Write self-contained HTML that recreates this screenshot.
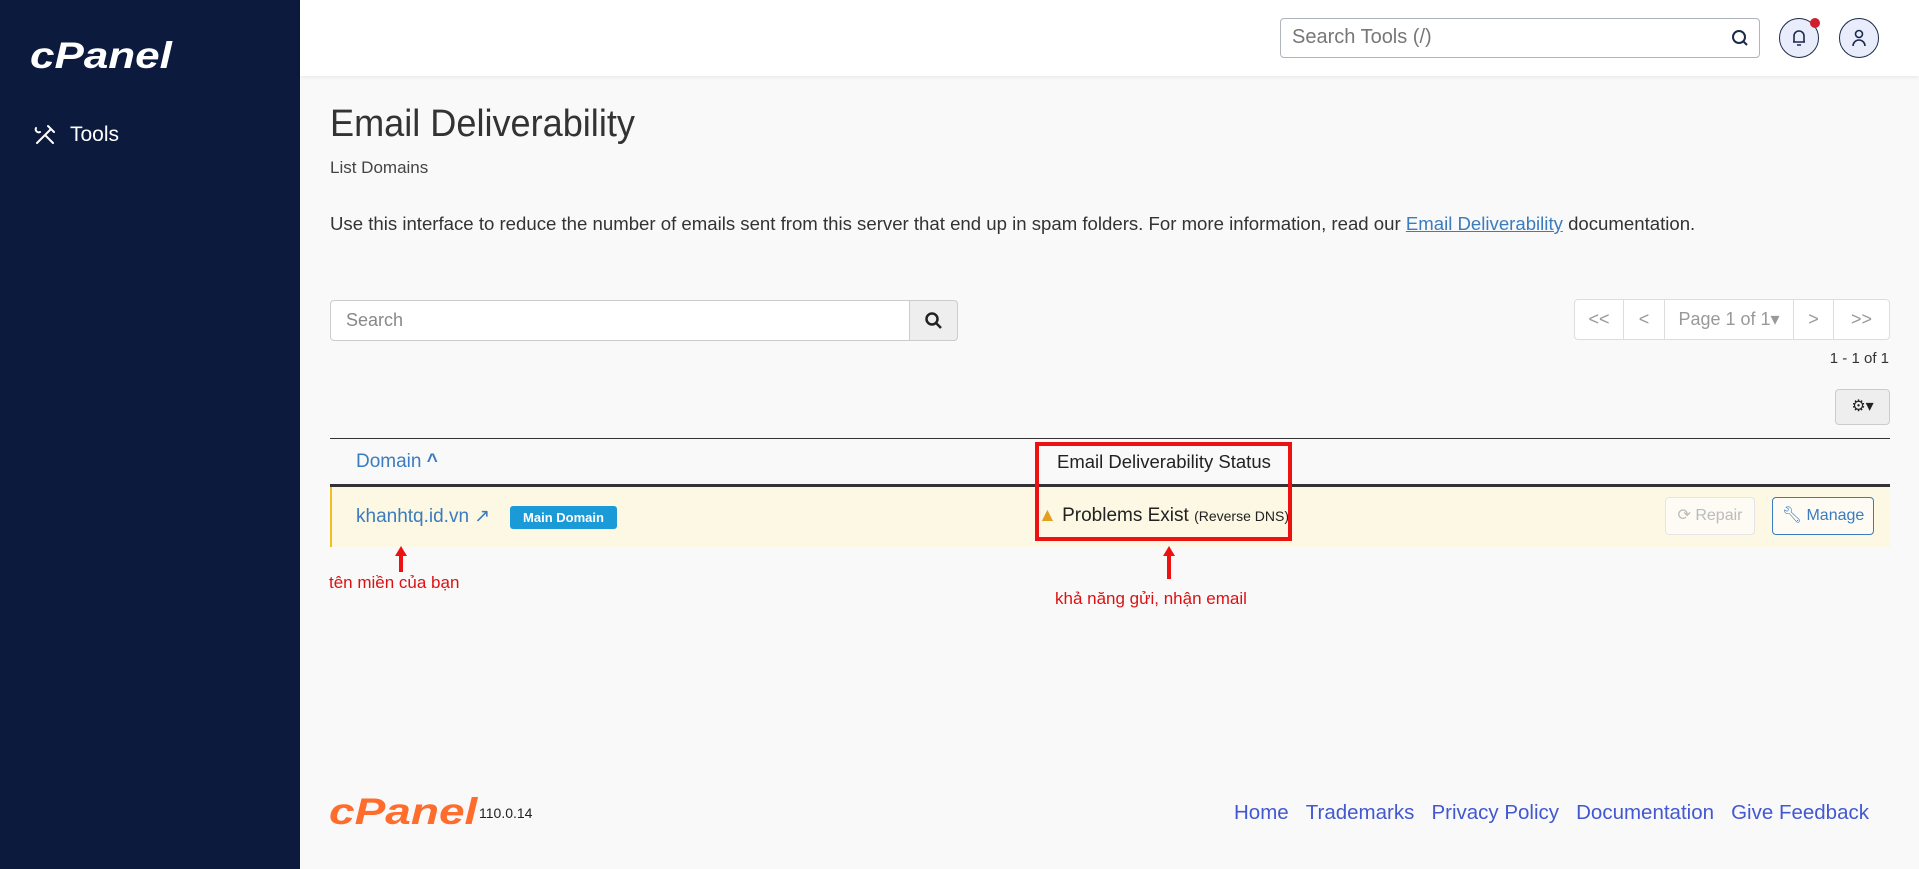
<!DOCTYPE html>
<html><head><meta charset="utf-8"><style>
*{box-sizing:border-box;margin:0;padding:0}
body{width:1919px;height:869px;overflow:hidden;background:#f9f9f9;font-family:"Liberation Sans",sans-serif;position:relative;color:#333}
.side{position:absolute;left:0;top:0;width:300px;height:869px;background:#0b1a3d}
.hdr{position:absolute;left:300px;top:0;right:0;height:76px;background:#fff;box-shadow:0 2px 4px rgba(0,0,0,.06)}
.abs{position:absolute}
.btn{position:absolute;border:1px solid #ccc;background:#fff;border-radius:4px}
</style></head><body>
<div class="side">
 <div class="abs" style="left:30px;top:31px;color:#fff;font:italic bold 44px 'Liberation Sans',sans-serif;letter-spacing:0px;transform:scaleY(.85);transform-origin:0 50%">cPanel</div>
 <svg class="abs" style="left:33px;top:123px" width="24" height="24" viewBox="0 0 24 24" fill="none" stroke="#fff" stroke-width="2" stroke-linecap="round"><path d="M4 20L18 6M15 3l6 6M20 20L12 12M3 5a3 3 0 0 0 4 4"/></svg>
 <div class="abs" style="left:70px;top:123px;color:#fff;font-size:21px">Tools</div>
</div>
<div class="hdr">
 <div class="abs" style="left:980px;top:18px;width:480px;height:40px;border:1px solid #b0b4bd;border-radius:4px"></div>
 <div class="abs" style="left:992px;top:26px;font-size:20px;color:#777">Search Tools (/)</div>
 <svg class="abs" style="left:1430px;top:28px" width="20" height="20" viewBox="0 0 20 20" fill="none" stroke="#1a2a4a" stroke-width="2"><circle cx="9" cy="9" r="6"/><path d="M13 13l4 4"/></svg>
 <div class="abs" style="left:1479px;top:18px;width:40px;height:40px;border:1px solid #1a2a4a;border-radius:50%;background:#e8ecfb"></div>
 <svg class="abs" style="left:1490px;top:28px" width="18" height="20" viewBox="0 0 18 20" fill="none" stroke="#1a2a4a" stroke-width="1.6"><path d="M4 14V8a5 5 0 0 1 10 0v6M3 14h12M7 17h4"/></svg>
 <div class="abs" style="left:1510px;top:18px;width:10px;height:10px;border-radius:50%;background:#d0202e"></div>
 <div class="abs" style="left:1539px;top:18px;width:40px;height:40px;border:1px solid #1a2a4a;border-radius:50%;background:#e8ecfb"></div>
 <svg class="abs" style="left:1549px;top:28px" width="20" height="20" viewBox="0 0 20 20" fill="none" stroke="#1a2a4a" stroke-width="1.6"><circle cx="10" cy="6" r="3.5"/><path d="M4 18a6 6 0 0 1 12 0"/></svg>
</div>
<div class="abs" style="left:330px;top:103px;font-size:38px;color:#333;font-weight:300;transform:scaleX(.95);transform-origin:0 0">Email Deliverability</div>
<div class="abs" style="left:330px;top:158px;font-size:17px;color:#444">List Domains</div>
<div class="abs" style="left:330px;top:213px;font-size:18.6px;color:#333;white-space:nowrap">Use this interface to reduce the number of emails sent from this server that end up in spam folders. For more information, read our <span style="color:#3a7cbf;text-decoration:underline">Email Deliverability</span> documentation.</div>
<div class="abs" style="left:330px;top:300px;width:580px;height:41px;border:1px solid #ccc;border-radius:4px 0 0 4px;background:#fff"></div>
<div class="abs" style="left:346px;top:310px;font-size:18px;color:#888">Search</div>
<div class="abs" style="left:909px;top:300px;width:49px;height:41px;border:1px solid #ccc;border-radius:0 4px 4px 0;background:#eee"></div>
<svg class="abs" style="left:924px;top:311px" width="20" height="20" viewBox="0 0 20 20" fill="none" stroke="#222" stroke-width="2.5"><circle cx="8" cy="8" r="5.5"/><path d="M12 12l5 5"/></svg>
<div class="abs" style="left:1574px;top:299px;width:316px;height:41px;border:1px solid #ddd;border-radius:4px;background:#fff;display:flex;font-size:18px;color:#999;align-items:center">
 <div style="width:49px;text-align:center;border-right:1px solid #ddd;line-height:39px">&lt;&lt;</div>
 <div style="width:41px;text-align:center;border-right:1px solid #ddd;line-height:39px">&lt;</div>
 <div style="width:129px;text-align:center;border-right:1px solid #ddd;line-height:39px">Page 1 of 1▾</div>
 <div style="width:40px;text-align:center;border-right:1px solid #ddd;line-height:39px">&gt;</div>
 <div style="flex:1;text-align:center;line-height:39px">&gt;&gt;</div>
</div>
<div class="abs" style="left:1780px;top:350px;width:109px;text-align:right;font-size:15px;color:#333">1 - 1 of 1</div>
<div class="abs" style="left:1835px;top:389px;width:55px;height:36px;border:1px solid #ccc;border-radius:4px;background:#eee;text-align:center;line-height:34px;font-size:16px;color:#222">⚙▾</div>
<div class="abs" style="left:330px;top:438px;width:1560px;height:1px;background:#333"></div>
<div class="abs" style="left:356px;top:451px;font-size:19px;color:#3a7cbf">Domain <b>^</b></div>
<div class="abs" style="left:1057px;top:451px;font-size:18.5px;color:#222">Email Deliverability Status</div>
<div class="abs" style="left:330px;top:484px;width:1560px;height:3px;background:#333"></div>
<div class="abs" style="left:330px;top:487px;width:1560px;height:60px;background:#fcf8e3;border-left:2px solid #f0c020"></div>
<div class="abs" style="left:356px;top:505px;font-size:19px;color:#3a7cbf">khanhtq.id.vn ↗</div>
<div class="abs" style="left:510px;top:506px;width:107px;height:23px;background:#1a9ad6;border-radius:3px;color:#fff;font-size:13px;font-weight:bold;text-align:center;line-height:23px">Main Domain</div>
<div class="abs" style="left:1038px;top:505px;font-size:19px;color:#222"><span style="color:#e0a020">▲</span> Problems Exist <span style="font-size:14px">(Reverse DNS)</span></div>
<div class="abs" style="left:1035px;top:442px;width:257px;height:99px;border:4px solid #ee1111"></div>
<div class="btn" style="left:1665px;top:497px;width:90px;height:38px;background:#fdfbf3;border-color:#e5e5e5;color:#bbb;font-size:16px;text-align:center;line-height:36px">⟳ Repair</div>
<div class="btn" style="left:1772px;top:497px;width:102px;height:38px;background:#fdfbf3;border-color:#3a7cbf;color:#3a7cbf;font-size:16px;text-align:center;line-height:36px">🔧︎ Manage</div>
<div class="abs" style="left:399px;top:550px;width:4px;height:22px;background:#e11"></div>
<div class="abs" style="left:395px;top:546px;width:0;height:0;border-left:6px solid transparent;border-right:6px solid transparent;border-bottom:10px solid #e11"></div>
<div class="abs" style="left:329px;top:573px;font-size:17px;color:#d11">tên miền của bạn</div>
<div class="abs" style="left:1167px;top:552px;width:4px;height:27px;background:#e11"></div>
<div class="abs" style="left:1163px;top:546px;width:0;height:0;border-left:6px solid transparent;border-right:6px solid transparent;border-bottom:10px solid #e11"></div>
<div class="abs" style="left:1055px;top:589px;font-size:17px;color:#d11">khả năng gửi, nhận email</div>
<div class="abs" style="left:329px;top:784px;color:#ff6c2c;font:italic bold 46px 'Liberation Sans',sans-serif;transform:scaleY(.8);transform-origin:0 50%">cPanel</div>
<div class="abs" style="left:479px;top:805px;font-size:14px;color:#222">110.0.14</div>
<div class="abs" style="left:1234px;top:801px;font-size:20.5px;color:#4258d0;white-space:nowrap">Home&nbsp;&nbsp;&nbsp;Trademarks&nbsp;&nbsp;&nbsp;Privacy Policy&nbsp;&nbsp;&nbsp;Documentation&nbsp;&nbsp;&nbsp;Give Feedback</div>
</body></html>
